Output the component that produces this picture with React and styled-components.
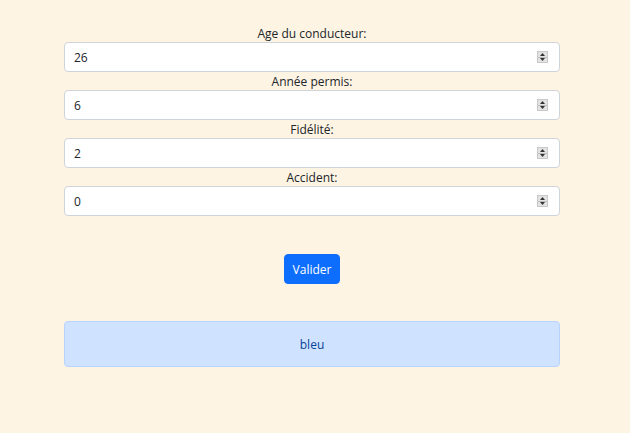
import React from "react";
import styled, { createGlobalStyle } from "styled-components";

const Global = createGlobalStyle`
  html, body { margin: 0; padding: 0; background: #fdf4e4; }
  body { font-family: "Open Sans", "Noto Sans", sans-serif; color: #212529; }
  * { box-sizing: border-box; }
`;

const Page = styled.div`
  width: 630px;
  min-height: 433px;
  padding: 24px 70px 0 64px;
`;

const Form = styled.form`
  display: flex;
  flex-direction: column;
`;

const Group = styled.div`
  display: flex;
  flex-direction: column;
  align-items: center;
`;

const Label = styled.label`
  font-size: 12px;
  line-height: 17px;
  padding-top: 1px;
  color: #212529;
`;

const Field = styled.div`
  width: 100%;
  height: 30px;
  display: flex;
  align-items: center;
  background: #fff;
  border: 1px solid #ced4da;
  border-radius: 4px;
  padding: 0 11px 0 9px;
`;

const Input = styled.input`
  flex: 1;
  border: none;
  outline: none;
  background: transparent;
  font-family: inherit;
  font-size: 12px;
  color: #212529;
  padding: 0;
`;

const Spinner = styled.span`
  display: flex;
  flex-direction: column;
  width: 11px;
  height: 12px;
  background: #e3e3e3;
  border: 1px solid #c9c9c9;
`;

const SpinHalf = styled.span`
  flex: 1;
  display: flex;
  align-items: center;
  justify-content: center;
  & + & { border-top: 1px solid #bdbdbd; }
`;

const Actions = styled.div`
  display: flex;
  justify-content: center;
  margin-top: 38px;
`;

const Button = styled.button`
  height: 30px;
  padding: 0 8px;
  background: #0d6efd;
  color: #fff;
  border: 1px solid #0d6efd;
  border-radius: 4px;
  font-family: inherit;
  font-size: 12px;
`;

const Alert = styled.div`
  margin-top: 37px;
  height: 46px;
  display: flex;
  align-items: center;
  justify-content: center;
  background: #cfe2ff;
  border: 1px solid #b6d4fe;
  border-radius: 4px;
  color: #084298;
  font-size: 12px;
`;

const Tri = ({ up }) => (
  <svg width="5" height="3" viewBox="0 0 5 3">
    <polygon points={up ? "2.5,0 5,3 0,3" : "0,0 5,0 2.5,3"} fill="#333" />
  </svg>
);

const fields = [
  ["Age du conducteur:", "26"],
  ["Année permis:", "6"],
  ["Fidélité:", "2"],
  ["Accident:", "0"],
];

export default function App() {
  return (
    <Page>
      <Global />
      <Form onSubmit={(e) => e.preventDefault()}>
        {fields.map(([label, value]) => (
          <Group key={label}>
            <Label>{label}</Label>
            <Field>
              <Input type="text" defaultValue={value} />
              <Spinner>
                <SpinHalf><Tri up /></SpinHalf>
                <SpinHalf><Tri /></SpinHalf>
              </Spinner>
            </Field>
          </Group>
        ))}
        <Actions>
          <Button type="submit">Valider</Button>
        </Actions>
      </Form>
      <Alert>bleu</Alert>
    </Page>
  );
}
